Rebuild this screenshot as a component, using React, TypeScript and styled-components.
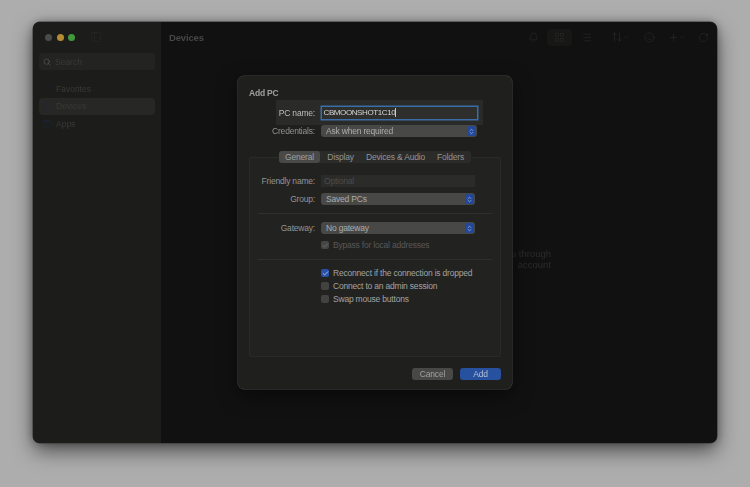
import React from "react";
import styled, { createGlobalStyle } from "styled-components";
import { Bell, ChevronDown, Check, ChevronsUpDown, LayoutGrid, List, Plus, RotateCw, Search, Smile, ArrowUpDown, Star, Monitor, AppWindow, PanelLeft } from "lucide-react";

const GlobalStyle = createGlobalStyle`
  html, body {
    margin: 0;
    padding: 0;
    background: #adadad;
  }
  body {
    font-family: "Liberation Sans", Arial, sans-serif;
  }
`;

const Page = styled.div`
  width: 750px;
  height: 487px;
  padding: 22px 33px 44px 33px;
  box-sizing: border-box;
  position: relative;
  overflow: hidden;
  filter: blur(0.25px);
`;

const Window = styled.div`
  display: flex;
  height: 421px;
  border-radius: 7px;
  overflow: hidden;
  background: #111111;
  box-shadow: 0 0 0 0.5px #3a3a3a, 0 8px 20px rgba(0, 0, 0, 0.55), 0 0 8px rgba(0, 0, 0, 0.3);
`;

const Sidebar = styled.aside`
  width: 128px;
  flex-shrink: 0;
  background: #1c1c1b;
  padding: 0 6px;
  box-sizing: border-box;
  display: flex;
  flex-direction: column;
`;

const TrafficRow = styled.div`
  display: flex;
  align-items: center;
  gap: 4.5px;
  height: 30px;
  padding-left: 6px;
  color: #2a2a2a;
`;

const Dot = styled.span<{ $color: string }>`
  width: 7px;
  height: 7px;
  border-radius: 50%;
  background: ${(p) => p.$color};
`;

const ToggleIcon = styled.span`
  display: flex;
  margin-left: 10px;
`;

const SearchBox = styled.div`
  display: flex;
  align-items: center;
  gap: 4px;
  height: 17px;
  margin-top: 1px;
  padding-left: 4px;
  background: #232322;
  border-radius: 4px;
  color: #3a3a39;
  font-size: 8.5px;
  svg {
    color: #6a6a6a;
  }
`;

const NavList = styled.nav`
  margin-top: 10px;
  display: flex;
  flex-direction: column;
`;

const NavItem = styled.div<{ $active?: boolean }>`
  display: flex;
  align-items: center;
  gap: 4px;
  height: 17.5px;
  padding-left: 4px;
  border-radius: 4px;
  font-size: 8.5px;
  color: #393938;
  background: ${(p) => (p.$active ? "#272726" : "transparent")};
  svg {
    color: #1c2b40;
  }
`;

const Main = styled.main`
  flex: 1;
  display: flex;
  flex-direction: column;
  min-width: 0;
`;

const Toolbar = styled.header`
  display: flex;
  align-items: center;
  height: 30px;
  padding: 0 7px 0 8px;
  color: #2e2e2e;
`;

const Title = styled.h1`
  margin: 0;
  font-size: 9.5px;
  font-weight: 700;
  letter-spacing: -0.15px;
  color: #474747;
  flex: 1;
`;

const ToolGroup = styled.div`
  display: flex;
  align-items: center;
`;

const ToolButton = styled.span<{ $w: number; $active?: boolean; $pr?: number }>`
  display: flex;
  align-items: center;
  justify-content: center;
  box-sizing: border-box;
  width: ${(p) => p.$w}px;
  padding-right: ${(p) => p.$pr ?? 0}px;
  height: 17px;
  border-radius: 4px;
  background: ${(p) => (p.$active ? "#171716" : "transparent")};
`;

const EmptyState = styled.div`
  flex: 1;
  display: flex;
  flex-direction: column;
  align-items: flex-end;
  padding: 196px 166px 0 0;
  font-size: 9.5px;
  line-height: 11px;
  color: #2c2c2c;
  white-space: nowrap;
`;

const Dialog = styled.section`
  position: absolute;
  left: 238px;
  top: 76px;
  width: 274px;
  height: 313px;
  box-sizing: border-box;
  padding: 0 11px;
  background: #1f1f1e;
  border-radius: 6px;
  box-shadow: 0 0 0 0.5px #444, 0 6px 20px rgba(0, 0, 0, 0.5);
  color: #a8a8a8;
  font-size: 8.5px;
  letter-spacing: -0.2px;
  display: flex;
  flex-direction: column;
`;

const DialogTitle = styled.h2`
  margin: 12px 0 0 0;
  height: 10px;
  line-height: 10px;
  font-size: 8.5px;
  font-weight: 700;
  color: #a0a0a0;
`;

const NameStrip = styled.div`
  display: grid;
  grid-template-columns: 34px auto;
  align-items: center;
  gap: 7px;
  width: 207px;
  height: 25px;
  margin: 2px 0 0 27px;
  padding-left: 5px;
  box-sizing: border-box;
  background: #2a2a29;
  border-radius: 1px;
`;

const Label = styled.label<{ $bright?: boolean }>`
  justify-self: end;
  white-space: nowrap;
  color: ${(p) => (p.$bright ? "#bdbdbd" : "#949494")};
`;

const NameInput = styled.div`
  width: 155px;
  height: 12px;
  box-sizing: border-box;
  padding-left: 1.5px;
  line-height: 12px;
  font-size: 8px;
  letter-spacing: -0.4px;
  background: #2e2e2d;
  color: #d6d6d6;
  box-shadow: 0 0 0 1.5px #3a6ea8;
  white-space: nowrap;
  span {
    border-right: 1px solid #c8c8c8;
  }
`;

const Row = styled.div<{ $top: number; $fieldW: number }>`
  display: grid;
  grid-template-columns: 66px ${(p) => p.$fieldW}px;
  align-items: center;
  gap: 6px;
  height: 12px;
  margin-top: ${(p) => p.$top}px;
`;

const Select = styled.div`
  display: flex;
  align-items: center;
  justify-content: space-between;
  height: 12px;
  padding: 0 1px 0 5px;
  border-radius: 3px;
  background: #484847;
  color: #adadad;
`;

const Stepper = styled.span`
  display: flex;
  align-items: center;
  justify-content: center;
  width: 9px;
  height: 10px;
  border-radius: 2.5px;
  background: #23479a;
  color: #c8d2e8;
`;

const TabPanel = styled.div`
  position: relative;
  margin-top: 20px;
  height: 200px;
  box-sizing: border-box;
  padding: 18px 0 0 0;
  background: #222221;
  border-radius: 3px;
  box-shadow: inset 0 0 0 0.5px #333332;
`;

const Tabs = styled.div`
  position: absolute;
  left: 30px;
  top: -6px;
  display: flex;
  align-items: center;
  height: 12px;
  border-radius: 3px;
  background: #2b2b2a;
`;

const Tab = styled.span<{ $active?: boolean; $w: number }>`
  display: flex;
  align-items: center;
  justify-content: center;
  width: ${(p) => p.$w}px;
  height: 12px;
  border-radius: 3px;
  color: ${(p) => (p.$active ? "#a0a0a0" : "#949494")};
  background: ${(p) => (p.$active ? "#494948" : "transparent")};
`;

const OptionalInput = styled.div`
  height: 12px;
  line-height: 12px;
  padding-left: 3px;
  color: #4c4c4b;
  background: #2b2b2a;
`;

const Divider = styled.hr<{ $top: number }>`
  border: 0;
  height: 1px;
  margin: ${(p) => p.$top}px 9px 0 9px;
  background: #2f2f2e;
`;

const CheckRow = styled.div<{ $dim?: boolean; $top: number }>`
  display: flex;
  align-items: center;
  gap: 4px;
  margin: ${(p) => p.$top}px 0 0 72px;
  height: 10px;
  color: ${(p) => (p.$dim ? "#585857" : "#a2a2a2")};
`;

const Box = styled.span<{ $state: "on" | "off" | "dim" }>`
  display: flex;
  align-items: center;
  justify-content: center;
  width: 8px;
  height: 8px;
  border-radius: 2px;
  background: ${(p) => (p.$state === "on" ? "#2a50a8" : p.$state === "dim" ? "#454544" : "#424241")};
  color: ${(p) => (p.$state === "on" ? "#dfe6f4" : "#7a7a7a")};
`;

const Footer = styled.footer`
  display: flex;
  justify-content: flex-end;
  gap: 7px;
  margin-top: 11px;
`;

const DialogButton = styled.button<{ $primary?: boolean }>`
  width: 41px;
  height: 12px;
  padding: 0;
  border: 0;
  border-radius: 3px;
  font: inherit;
  letter-spacing: inherit;
  color: ${(p) => (p.$primary ? "#b4bfd6" : "#a0a0a0")};
  background: ${(p) => (p.$primary ? "#27509f" : "#484847")};
`;

export default function App() {
  return (
    <Page>
      <GlobalStyle />
      <Window>
        <Sidebar>
          <TrafficRow>
            <Dot $color="#4b4b4b" />
            <Dot $color="#b48c33" />
            <Dot $color="#3f9a3c" />
            <ToggleIcon>
              <PanelLeft size={12} strokeWidth={1} />
            </ToggleIcon>
          </TrafficRow>
          <SearchBox>
            <Search size={8} strokeWidth={1.5} />
            Search
          </SearchBox>
          <NavList>
            <NavItem>
              <Star size={9} strokeWidth={1.2} />
              Favorites
            </NavItem>
            <NavItem $active>
              <Monitor size={9} strokeWidth={1.2} />
              Devices
            </NavItem>
            <NavItem>
              <AppWindow size={9} strokeWidth={1.2} />
              Apps
            </NavItem>
          </NavList>
        </Sidebar>
        <Main>
          <Toolbar>
            <Title>Devices</Title>
            <ToolGroup>
              <ToolButton $w={23} $pr={5}>
                <Bell size={11} strokeWidth={1.2} />
              </ToolButton>
              <ToolButton $w={25} $active>
                <LayoutGrid size={11} strokeWidth={1.2} />
              </ToolButton>
              <ToolButton $w={28}>
                <List size={11} strokeWidth={1.2} />
              </ToolButton>
              <ToolButton $w={40}>
                <ArrowUpDown size={12} strokeWidth={1.2} />
                <ChevronDown size={7} strokeWidth={1.5} />
              </ToolButton>
              <ToolButton $w={18}>
                <Smile size={11} strokeWidth={1.2} />
              </ToolButton>
              <ToolButton $w={38}>
                <Plus size={11} strokeWidth={1.2} />
                <ChevronDown size={7} strokeWidth={1.5} />
              </ToolButton>
              <ToolButton $w={14}>
                <RotateCw size={11} strokeWidth={1.2} />
              </ToolButton>
            </ToolGroup>
          </Toolbar>
          <EmptyState>
            <span>you through</span>
            <span>account</span>
          </EmptyState>
        </Main>
      </Window>
      <Dialog>
        <DialogTitle>Add PC</DialogTitle>
        <NameStrip>
          <Label $bright>PC name:</Label>
          <NameInput>
            <span>CBMOONSHOT1C10</span>
          </NameInput>
        </NameStrip>
        <Row $top={0} $fieldW={156}>
          <Label>Credentials:</Label>
          <Select>
            Ask when required
            <Stepper>
              <ChevronsUpDown size={7} strokeWidth={2} />
            </Stepper>
          </Select>
        </Row>
        <TabPanel>
          <Tabs>
            <Tab $active $w={41}>General</Tab>
            <Tab $w={41}>Display</Tab>
            <Tab $w={69}>Devices &amp; Audio</Tab>
            <Tab $w={41}>Folders</Tab>
          </Tabs>
          <Row $top={0} $fieldW={154}>
            <Label>Friendly name:</Label>
            <OptionalInput>Optional</OptionalInput>
          </Row>
          <Row $top={6} $fieldW={154}>
            <Label>Group:</Label>
            <Select>
              Saved PCs
              <Stepper>
                <ChevronsUpDown size={7} strokeWidth={2} />
              </Stepper>
            </Select>
          </Row>
          <Divider $top={8} />
          <Row $top={8} $fieldW={154}>
            <Label>Gateway:</Label>
            <Select>
              No gateway
              <Stepper>
                <ChevronsUpDown size={7} strokeWidth={2} />
              </Stepper>
            </Select>
          </Row>
          <CheckRow $dim $top={6}>
            <Box $state="dim">
              <Check size={7} strokeWidth={2.5} />
            </Box>
            Bypass for local addresses
          </CheckRow>
          <Divider $top={9} />
          <CheckRow $top={8}>
            <Box $state="on">
              <Check size={7} strokeWidth={2.5} />
            </Box>
            Reconnect if the connection is dropped
          </CheckRow>
          <CheckRow $top={3}>
            <Box $state="off" />
            Connect to an admin session
          </CheckRow>
          <CheckRow $top={3}>
            <Box $state="off" />
            Swap mouse buttons
          </CheckRow>
        </TabPanel>
        <Footer>
          <DialogButton>Cancel</DialogButton>
          <DialogButton $primary>Add</DialogButton>
        </Footer>
      </Dialog>
    </Page>
  );
}
